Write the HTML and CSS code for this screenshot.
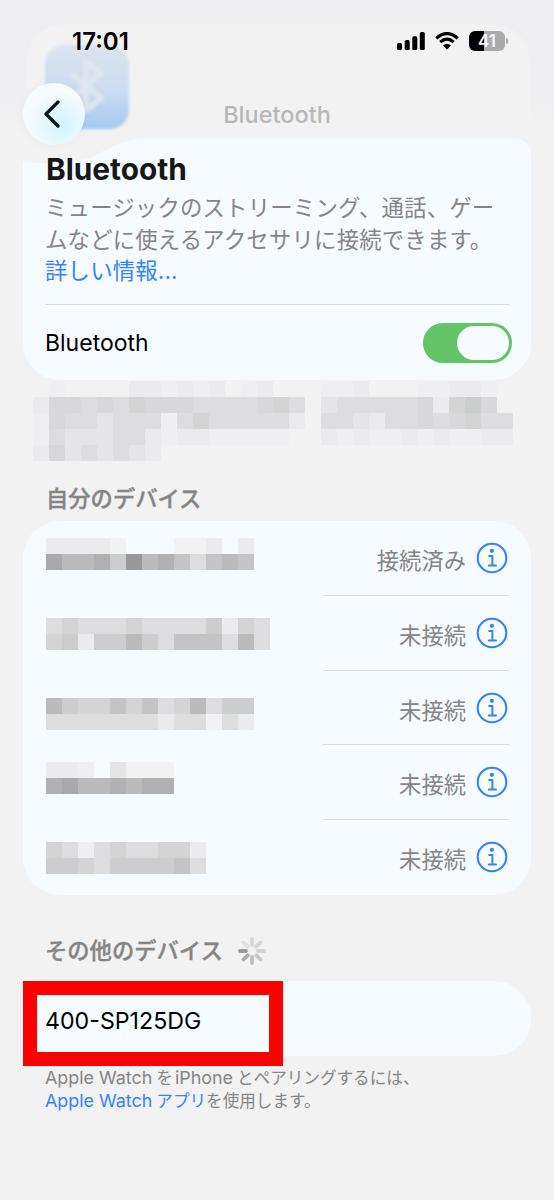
FILE: index.html
```
<!DOCTYPE html>
<html lang="ja">
<head>
<meta charset="utf-8">
<title>Bluetooth</title>
<link rel="stylesheet" href="styles.css">
</head>
<body>
<div class="screen">
  <header class="top">
    <div class="top-glass"></div>
    <svg class="app-icon" viewBox="0 0 100 100" aria-hidden="true">
      <defs><linearGradient id="ig" x1="0" y1="0" x2="0" y2="1"><stop offset="0" stop-color="#dce4ef"/><stop offset=".55" stop-color="#cbdcf1"/><stop offset="1" stop-color="#a5c8ef"/></linearGradient></defs>
      <rect x="7" y="7" width="84" height="84" rx="19" fill="url(#ig)"/>
      <path d="M35 38 63 60 48 72V24L63 35 35 60" fill="none" stroke="#dfe6ef" stroke-width="6" stroke-linejoin="round" stroke-linecap="round"/>
    </svg>
    <div class="status">
      <span class="time">17:01</span>
      <span class="status-icons">
        <svg width="28" height="18" viewBox="0 0 28 18"><rect x="0" y="11" width="5" height="7" rx="1.6"/><rect x="7.7" y="8" width="5" height="10" rx="1.6"/><rect x="15.3" y="4.3" width="5" height="13.7" rx="1.6"/><rect x="22.8" y="0" width="5" height="18" rx="1.6"/></svg>
        <svg width="24" height="18" viewBox="0 0 24 18"><path d="M1.3 6.3Q12-3.2 22.7 6.3M5.2 10.2Q12 4.2 18.8 10.2" fill="none" stroke="#000" stroke-width="3.1"/><path d="M8 13.4Q12 10.1 16 13.4L12 17.5Z"/></svg>
        <span class="battery"><span class="battery-body">41</span><span class="battery-tip"></span></span>
      </span>
    </div>
    <nav class="nav">
      <button class="back" aria-label="戻る"><svg width="16" height="28" viewBox="0 0 16 28"><path d="M14 2 2 14 14 26" fill="none" stroke="#07151f" stroke-width="3.2" stroke-linecap="round" stroke-linejoin="round"/></svg></button>
      <span class="nav-title">Bluetooth</span>
    </nav>
  </header>

  <section class="card intro">
    <h1>Bluetooth</h1>
    <p class="lead">ミュージックのストリーミング、通話、ゲー<br>ムなどに使えるアクセサリに接続できます。<br><a>詳しい情報...</a></p>
    <div class="toggle-row"><span>Bluetooth</span><span class="switch"><span class="knob"></span></span></div>
  </section>

  <div class="mosaic notice" data-mosaic="notice"></div>

  <h2 class="mine">自分のデバイス</h2>
  <section class="card devices">
    <div class="device"><div class="mosaic" data-mosaic="device1"></div><div class="info-cell"><span>接続済み</span><svg class="info"><use href="#info"/></svg></div></div>
    <div class="device"><div class="mosaic" data-mosaic="device2"></div><div class="info-cell"><span>未接続</span><svg class="info"><use href="#info"/></svg></div></div>
    <div class="device"><div class="mosaic" data-mosaic="device3"></div><div class="info-cell"><span>未接続</span><svg class="info"><use href="#info"/></svg></div></div>
    <div class="device"><div class="mosaic" data-mosaic="device4"></div><div class="info-cell"><span>未接続</span><svg class="info"><use href="#info"/></svg></div></div>
    <div class="device"><div class="mosaic" data-mosaic="device5"></div><div class="info-cell"><span>未接続</span><svg class="info"><use href="#info"/></svg></div></div>
  </section>

  <h2 class="others">その他のデバイス
    <svg class="spinner" width="30" height="30" viewBox="-15 -15 30 30" stroke-width="3.8" stroke-linecap="round"><path d="M0-6V-12" stroke="#d8d8d8"/><path d="M4.3-4.3 8.5-8.5" stroke="#d6d6d6"/><path d="M6 0H12" stroke="#d2d2d2"/><path d="M4.3 4.3 8.5 8.5" stroke="#c8c8c8"/><path d="M0 6V12" stroke="#bcbcbc"/><path d="M-4.3 4.3-8.5 8.5" stroke="#aaa"/><path d="M-6 0H-12" stroke="#999"/><path d="M-4.3-4.3-8.5-8.5" stroke="#ddd"/></svg>
  </h2>
  <section class="card found">400-SP125DG<div class="highlight"></div></section>
  <p class="foot"><span class="latin">Apple Watch</span>を<span class="latin">iPhone</span>とペアリングするには、<br><a><span class="latin">Apple Watch</span>アプリ</a>を使用します。</p>
</div>
<svg class="defs" width="0" height="0"><symbol id="info" viewBox="0 0 32 32"><circle cx="16" cy="16" r="14.3" fill="none" stroke="#3484f8" stroke-width="2.1"/><circle cx="15.9" cy="8.8" r="2.1" fill="#3484f8"/><path d="M13.2 14H16.4V23.6M12.8 23.6H20" fill="none" stroke="#3484f8" stroke-width="2" stroke-linecap="round" stroke-linejoin="round"/></symbol></svg>
<script src="mosaic.js"></script>
</body>
</html>
```
FILE: styles.css
```
* { box-sizing: border-box; }
body { margin: 0; background: #f2f2f2; font-family: Inter, "Noto Sans CJK JP", sans-serif; color: #000; }
.screen { position: relative; width: 554px; height: 1200px; overflow: hidden; background: #f2f2f2; }
.top { position: relative; z-index: 1; height: 138px; background: linear-gradient(#eeeef1 0, #efeff1 70%, #f2f2f2); }
.top-glass { position: absolute; left: 27px; right: 24px; top: 24px; bottom: 0; border-radius: 38px 38px 0 0; background: #f2f2f2; filter: blur(1px); }
.app-icon { position: absolute; left: 38px; top: 38px; width: 100px; height: 100px; filter: blur(1.5px); }
.status { position: relative; display: flex; justify-content: space-between; align-items: center; height: 83px; padding: 0 46px 1px 72px; }
.time { padding-top: 1px; font-size: 24px; font-weight: 600; }
.status-icons { display: flex; align-items: center; gap: 10px; }
.battery { display: flex; align-items: center; gap: 1px; }
.battery-body { width: 36px; height: 20px; border-radius: 6px; background: linear-gradient(90deg, #000 41%, #ababab 41%); color: #f5fbfe; font-size: 17px; line-height: 20px; font-weight: 600; text-align: center; }
.battery-tip { width: 2px; height: 6px; border-radius: 0 2px 2px 0; background: #ababab; }
.nav { position: relative; height: 62px; display: grid; grid-template-columns: 62px 1fr 62px; padding: 0 23px; align-items: center; }
.back { width: 62px; height: 62px; border: 0; border-radius: 50%; padding: 0 5px 0 0; background: radial-gradient(circle at 62% 68%, #d2f3fd 0, #e2f8fd 30%, #f5fbfe 56%); display: flex; align-items: center; justify-content: center; box-shadow: 0 0 12px rgba(0,0,0,.04); }
.nav-title { padding-top: 1px; text-align: center; font-size: 23.5px; font-weight: 500; color: #b8b8b8; }
.card { position: relative; margin: 0 23px; background: #f5fbfe; border-radius: 37px; }
.intro { z-index: 0; height: 242px; padding: 11px 22px 0 22px; background: none; }
.intro::before { content: ""; position: absolute; inset: 0; z-index: -1; background: #f5fbfe; border-radius: 0 16px 37px 37px; clip-path: polygon(0 24px, 30px 26px, 65px 21px, 90px 8px, 115px 0, 100% 0, 100% 100%, 0 100%); }
h1 { margin: 0; padding-left: 1px; font-size: 29.8px; line-height: 40px; font-weight: 700; color: #171717; }
.lead { margin: 3px 0 0; font-size: 22.4px; letter-spacing: .18px; line-height: 31.5px; color: #858585; white-space: nowrap; }
a { color: #3484f8; }
.toggle-row { margin-top: 17px; border-top: 1px solid #dcdce0; height: 77px; display: flex; align-items: center; justify-content: space-between; font-size: 23px; }
.switch { width: 89px; height: 40px; border-radius: 20px; background: #65c466; padding: 3px; margin-right: -3px; display: flex; justify-content: flex-end; }
.knob { width: 52px; height: 34px; border-radius: 17px; background: #f5fbfe; }
.mosaic svg { display: block; }
.notice { margin: 1px 0 0 33px; height: 80px; }
h2 { margin: 0 0 0 46px; font-size: 22.3px; font-weight: 500; -webkit-text-stroke: .35px #858585; line-height: 32px; color: #858585; }
.mine { margin-top: 22px; }
.devices { margin-top: 6px; height: 374px; padding: 0 22px 0 23px; display: grid; grid-template-rows: 75px 75px 74px 75px 75px; }
.device { display: flex; justify-content: space-between; }
.device .mosaic { padding-top: 17px; }
.device:nth-child(2) .mosaic { padding-top: 22px; }
.device:nth-child(3) .mosaic { padding-top: 27px; }
.device:nth-child(4) .mosaic { padding-top: 17px; }
.device:nth-child(5) .mosaic { padding-top: 22px; }
.info-cell { width: 186px; display: flex; align-items: center; justify-content: flex-end; gap: 10px; font-size: 22.3px; color: #858585; border-bottom: 1px solid #dcdce0; }
.info-cell span { padding-top: 2px; }
.device:last-child .info-cell { border-bottom-color: transparent; padding-bottom: 1px; }
.info { width: 32px; height: 32px; margin-right: 1px; }
.others { margin: 40px 0 0 45px; display: flex; align-items: center; gap: 14px; }
.found { margin-top: 14px; height: 75px; padding: 4px 22px 0; display: flex; align-items: center; font-size: 23.2px; }
.highlight { position: absolute; left: 0; top: 0; width: 260px; height: 85px; border: 14px solid #f00; }
.foot { margin: 11px 0 0 45px; font-size: 16.6px; line-height: 22.5px; color: #858585; white-space: nowrap; }
.latin { font-size: 17.9px; margin-right: 4px; }
.foot > .latin + .latin { margin-left: 2px; }
.defs { position: absolute; }
```
FILE: mosaic.js
```
const CELL = 16;

const shades = {
  w: '#f2f2f2', a: '#efeff1', b: '#ebebed', c: '#e5e5e7', d: '#dddddf',
  m: '#d8d8da', e: '#d4d4d4', f: '#cbcecd', g: '#c4c4c4', h: '#bbbbbb',
  i: '#b1b1b1', j: '#a9a9a9', k: '#999999'
};

const patterns = {
  notice: [
    'wa...wbbababwabw..aab...aabba.',
    'bmmdmdemmmddddmed.cdddddmbefm.',
    'amddcdddadedddddb.ddcbddmdmedd',
    'adcccddbabbaaaaa..babaababaabb',
    'bmcdcdcb'
  ],
  device1: ['bbbbw...wwb.b', 'jhhifkhigdghg'],
  device2: ['dedddeddddfbed', 'efbffhfdgggdhd'],
  device3: ['hfeegegdehdff', 'dddddddbddwdb'],
  device4: ['bba.cwww', 'ijhhihii'],
  device5: ['edadeddeeb', 'ffedffffgd']
};

document.querySelectorAll('[data-mosaic]').forEach((host) => {
  const rows = patterns[host.dataset.mosaic];
  const width = rows[0].length * CELL;
  const height = rows.length * CELL;
  let cells = '';
  rows.forEach((row, y) => [...row].forEach((key, x) => {
    if (shades[key]) {
      cells += `<rect x="${x * CELL}" y="${y * CELL}" width="${CELL}" height="${CELL}" fill="${shades[key]}"/>`;
    }
  }));
  host.innerHTML = `<svg width="${width}" height="${height}" shape-rendering="crispEdges">${cells}</svg>`;
});
```
